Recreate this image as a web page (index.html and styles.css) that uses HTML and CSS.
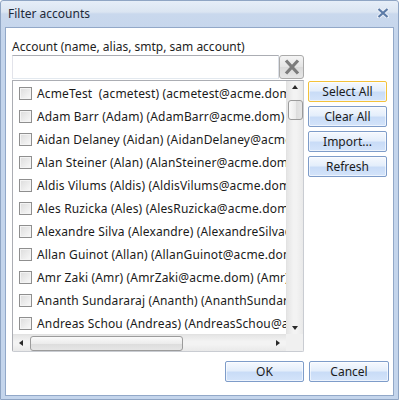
FILE: index.html
```html
<!DOCTYPE html>
<html>
<head>
<meta charset="utf-8">
<link rel="stylesheet" href="styles.css">
</head>
<body>
<div class="window">
  <div class="titlebar">
    <span class="title">Filter accounts</span>
    <svg class="close" width="12" height="10" viewBox="0 0 12 10">
      <path d="M1.5 1 L10.5 9 M10.5 1 L1.5 9" stroke="#e8eef7" stroke-width="4" stroke-linecap="square"/>
      <path d="M1.5 1 L10.5 9 M10.5 1 L1.5 9" stroke="#5b7aa6" stroke-width="2.2"/>
    </svg>
  </div>
  <div class="content">
    <div class="main">
      <div class="left">
        <div class="label">Account (name, alias, smtp, sam account)</div>
        <div class="search">
          <div class="textbox"></div>
          <div class="clearbtn">
            <svg width="20" height="18" viewBox="0 0 20 18">
              <path d="M4 2.5 L16 15.5 M16 2.5 L4 15.5" stroke="#7c7c7c" stroke-width="3.2"/>
            </svg>
          </div>
        </div>
        <div class="list">
          <div class="items">
            <div class="row"><span class="cb"></span><span class="txt">AcmeTest&nbsp; (acmetest) (acmetest@acme.dom)</span></div>
            <div class="row"><span class="cb"></span><span class="txt">Adam Barr (Adam) (AdamBarr@acme.dom)</span></div>
            <div class="row"><span class="cb"></span><span class="txt">Aidan Delaney (Aidan) (AidanDelaney@acme.dom)</span></div>
            <div class="row"><span class="cb"></span><span class="txt">Alan Steiner (Alan) (AlanSteiner@acme.dom)</span></div>
            <div class="row"><span class="cb"></span><span class="txt">Aldis Vilums (Aldis) (AldisVilums@acme.dom)</span></div>
            <div class="row"><span class="cb"></span><span class="txt">Ales Ruzicka (Ales) (AlesRuzicka@acme.dom)</span></div>
            <div class="row"><span class="cb"></span><span class="txt">Alexandre Silva (Alexandre) (AlexandreSilva@acme.dom)</span></div>
            <div class="row"><span class="cb"></span><span class="txt">Allan Guinot (Allan) (AllanGuinot@acme.dom)</span></div>
            <div class="row"><span class="cb"></span><span class="txt">Amr Zaki (Amr) (AmrZaki@acme.dom) (Amr)</span></div>
            <div class="row"><span class="cb"></span><span class="txt">Ananth Sundararaj (Ananth) (AnanthSundararaj@acme.dom)</span></div>
            <div class="row"><span class="cb"></span><span class="txt">Andreas Schou (Andreas) (AndreasSchou@acme.dom)</span></div>
          </div>
          <div class="vscroll">
            <span class="arrow up"></span>
            <div class="vthumb"></div>
            <span class="arrow down"></span>
          </div>
          <div class="hscroll">
            <span class="arrow left"></span>
            <div class="hthumb"></div>
            <span class="arrow right"></span>
          </div>
          <div class="corner"></div>
        </div>
      </div>
      <div class="side">
        <button class="btn focus">Select All</button>
        <button class="btn">Clear All</button>
        <button class="btn">Import...</button>
        <button class="btn">Refresh</button>
      </div>
    </div>
    <div class="footer">
      <button class="btn ok">OK</button>
      <button class="btn cancel">Cancel</button>
    </div>
  </div>
</div>
</body>
</html>
```
FILE: styles.css
```css
html, body {
  margin: 0;
  padding: 0;
  background: #ffffff;
}
body {
  font-family: "Noto Sans", "Open Sans", sans-serif;
  font-size: 12px;
  color: #1b1b1b;
}
.window {
  width: 399px;
  height: 400px;
  box-sizing: border-box;
  border: 1px solid #8fa5c4;
  border-radius: 3px 3px 0 0;
  background: linear-gradient(#e6eef8 0px, #dbe5f2 11px, #c9d8ed 13px, #c4d5ec 40px, #c4d5ec 100%);
  display: flex;
  flex-direction: column;
  padding: 0 4px 3px 4px;
}
.titlebar {
  height: 26px;
  display: flex;
  align-items: center;
  justify-content: space-between;
  padding: 0 5px 0 3px;
}
.title {
  font-size: 12px;
  color: #1e2a3a;
  margin-top: -1px;
}
.close {
  margin-top: -2px;
}
.content {
  flex: 1;
  background: #fff;
  border: 1px solid #92a8c8;
  display: flex;
  flex-direction: column;
  padding: 0 4px 0 6px;
}
.main {
  display: flex;
}
.left {
  width: 292px;
  display: flex;
  flex-direction: column;
}
.label {
  line-height: 16px;
  padding-top: 11px;
  height: 16px;
  white-space: nowrap;
  color: #1e1e1e;
}
.search {
  display: flex;
  height: 25px;
}
.textbox {
  flex: 1;
  border: 1px solid #abadb3;
  border-bottom-color: #e3e9ef;
  border-left-color: #e2e3ea;
  border-right-color: #dbdfe6;
  height: 22px;
}
.clearbtn {
  width: 23px;
  height: 22px;
  border: 1px solid #aaaaaa;
  border-radius: 3px;
  background: linear-gradient(#f4f4f4, #e4e4e4 50%, #dadada 51%, #e6e6e6);
  display: flex;
  align-items: center;
  justify-content: center;
}
.list {
  height: 272px;
  box-sizing: border-box;
  border: 1px solid #abadb3;
  border-right-color: #c9ccd2;
  border-bottom-color: #c9ccd2;
  border-radius: 0 0 2px 2px;
  display: grid;
  grid-template-columns: 273px 17px;
  grid-template-rows: 253px 17px;
}
.items {
  overflow: hidden;
  padding-top: 1px;
}
.row {
  height: 23px;
  display: flex;
  align-items: center;
  white-space: nowrap;
  padding-left: 6px;
}
.cb {
  flex: none;
  width: 11px;
  height: 11px;
  border: 1px solid #8f8f8f;
  background: linear-gradient(135deg, #dcdcdc, #f9f9f9);
  box-shadow: inset 0 0 0 1px #f4f4f4;
  margin-right: 5px;
}
.txt {
  color: #1b1b1b;
  letter-spacing: 0.15px;
}
.vscroll {
  background: linear-gradient(90deg, #e5e5e5, #f3f3f3 40%, #f3f3f3 60%, #e9e9e9);
  border-left: 1px solid #e2e2e2;
  position: relative;
}
.vthumb {
  position: absolute;
  left: 1px;
  top: 19px;
  width: 13px;
  height: 18px;
  border: 1px solid #9b9b9b;
  border-radius: 3px;
  background: linear-gradient(90deg, #fafafa, #ececec 50%, #dcdcdc 51%, #e6e6e6);
}
.hscroll {
  background: linear-gradient(#e5e5e5, #f3f3f3 40%, #f3f3f3 60%, #e9e9e9);
  border-top: 1px solid #e2e2e2;
  position: relative;
}
.hthumb {
  position: absolute;
  left: 17px;
  top: 1px;
  width: 151px;
  height: 13px;
  border: 1px solid #9b9b9b;
  border-radius: 3px;
  background: linear-gradient(#fafafa, #ececec 50%, #dcdcdc 51%, #e6e6e6);
}
.corner {
  background: #f0f0f0;
}
.arrow {
  position: absolute;
  width: 0;
  height: 0;
  border: 3px solid transparent;
}
.arrow.up { left: 5px; top: 4px; border-bottom: 4px solid #2a2a2a; border-top-width: 0; }
.arrow.down { left: 5px; bottom: 4px; border-top: 4px solid #2a2a2a; border-bottom-width: 0; }
.arrow.left { left: 6px; top: 5px; border-right: 4px solid #2a2a2a; border-left-width: 0; }
.arrow.right { right: 6px; top: 5px; border-left: 4px solid #2a2a2a; border-right-width: 0; }
.side {
  display: flex;
  flex-direction: column;
  gap: 4px;
  padding-top: 53px;
  margin-left: 4px;
}
.btn {
  font-family: "Noto Sans", "Open Sans", sans-serif;
  font-size: 12px;
  color: #1b1b1b;
  width: 79px;
  height: 21px;
  padding: 0;
  border: 1px solid #7e9cc9;
  border-radius: 2px;
  background: linear-gradient(#f6f9fe 0%, #e4eefb 45%, #c9dcf7 55%, #d4e4fa 100%);
  box-shadow: inset 0 0 0 1px rgba(255,255,255,0.6);
  line-height: 19px;
}
.btn.focus {
  border-color: #f3c23c;
}
.footer {
  display: flex;
  justify-content: flex-end;
  gap: 5px;
  margin-top: 9px;
}
.btn.cancel {
  width: 80px;
}
```
